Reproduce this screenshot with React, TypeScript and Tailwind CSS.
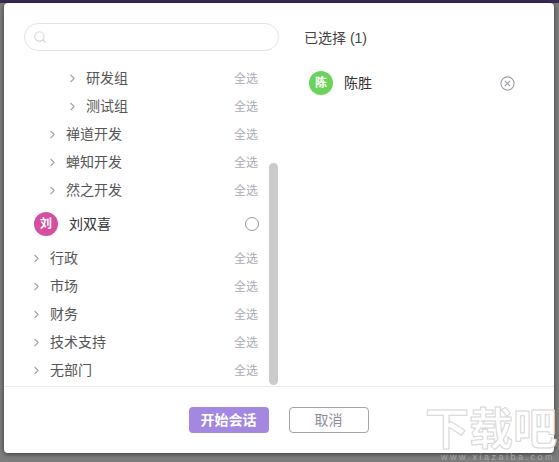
import { ChevronRight, Search } from 'lucide-react';

const font = 'font-["Liberation_Sans","Noto_Sans_CJK_SC",sans-serif]';

interface TreeRowProps {
  label: string;
  indent: string;
}

function TreeRow({ label, indent }: TreeRowProps) {
  return (
    <div className={`flex h-7 items-center pr-[22px] ${indent}`}>
      <ChevronRight className="h-[13px] w-[13px] text-[#a3a3a3]" strokeWidth={2} />
      <span className="ml-[7px] text-[14px] text-[#555]">{label}</span>
      <span className="ml-auto mt-[2px] text-[12px] text-[#acacb4]">全选</span>
    </div>
  );
}

function Avatar({ text, color }: { text: string; color: string }) {
  return (
    <div className={`flex h-6 w-6 items-center justify-center rounded-full text-[12px] font-bold text-white ${color}`}>
      {text}
    </div>
  );
}

export default function App() {
  return (
    <div className={`relative h-[462px] w-[559px] overflow-hidden bg-[#7d7d7d] ${font}`}>
      <div className="h-[3px] bg-[#3d2a57]" />
      <div className="ml-[4px] flex h-[450px] w-[550px] flex-col rounded-[4px] bg-white shadow-[0_1px_5px_rgba(0,0,0,0.55)]">
        <div className="flex min-h-0 flex-1">
          <div className="relative w-[276px] overflow-hidden pl-[20px] pt-[20px]">
            <div className="flex h-7 w-[255px] items-center rounded-full border border-[#e3e3e6] pl-[8px]">
              <Search className="h-[14px] w-[14px] text-[#d6d6da]" strokeWidth={2} />
            </div>
            <div className="mt-[13px]">
              <TreeRow label="研发组" indent="pl-[42px]" />
              <TreeRow label="测试组" indent="pl-[42px]" />
              <TreeRow label="禅道开发" indent="pl-[22px]" />
              <TreeRow label="蝉知开发" indent="pl-[22px]" />
              <TreeRow label="然之开发" indent="pl-[22px]" />
              <div className="flex h-[40px] items-center pl-[10px] pr-[21px]">
                <Avatar text="刘" color="bg-[#d64f9e]" />
                <span className="ml-[11px] text-[14px] text-[#333]">刘双喜</span>
                <span className="ml-auto h-[14px] w-[14px] rounded-full border border-[#999]" />
              </div>
              <TreeRow label="行政" indent="pl-[6px]" />
              <TreeRow label="市场" indent="pl-[6px]" />
              <TreeRow label="财务" indent="pl-[6px]" />
              <TreeRow label="技术支持" indent="pl-[6px]" />
              <TreeRow label="无部门" indent="pl-[6px]" />
            </div>
            <div className="absolute right-[2px] top-[160px] h-[222px] w-[9px] rounded-full bg-[#cbcbcb]" />
          </div>
          <div className="flex-1 pl-[25px] pr-[39px] pt-[26px]">
            <div className="-ml-[1px] text-[14px] leading-[18px] text-[#444]">已选择 (1)</div>
            <div className="mt-[24px] flex items-center pl-[4px]">
              <Avatar text="陈" color="bg-[#6bd35c]" />
              <span className="ml-[11px] text-[14px] text-[#333]">陈胜</span>
              <svg className="ml-auto h-[15px] w-[15px] text-[#9d9dab]" viewBox="0 0 15 15" fill="none" stroke="currentColor" strokeWidth="1.1">
                <circle cx="7.5" cy="7.5" r="6.6" />
                <path d="M4.8 4.8l5.4 5.4M10.2 4.8l-5.4 5.4" />
              </svg>
            </div>
          </div>
        </div>
        <div className="flex h-[67px] items-start justify-center border-t border-[#ececee] pt-[20px]">
          <div className="-ml-[1px] flex gap-[20px]">
            <button className="flex h-[26px] w-[80px] items-center justify-center rounded-[4px] bg-[#a487e0] text-[14px] font-bold text-white">
              开始会话
            </button>
            <button className="flex h-[26px] w-[80px] items-center justify-center rounded-[4px] border border-[#a3a3a8] text-[14px] text-[#8d8d98]">
              取消
            </button>
          </div>
        </div>
      </div>
      <div className="absolute bottom-[12px] right-[2px] text-[44px] font-bold leading-[40px] text-white [-webkit-text-stroke:1px_#d6d6d6]">
        下载吧
      </div>
      <div className="absolute bottom-0 right-[4px] text-[9px] leading-[9px] tracking-[2.5px] text-[#a8a8a8]">
        www.xiazaiba.com
      </div>
    </div>
  );
}
